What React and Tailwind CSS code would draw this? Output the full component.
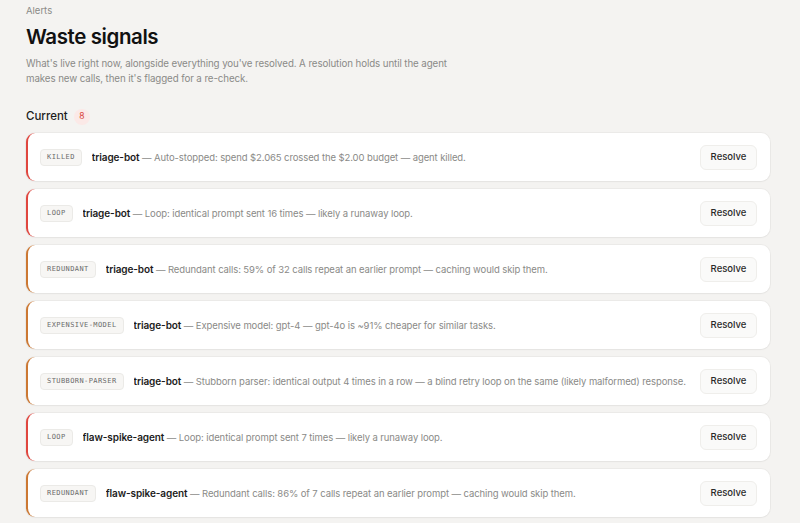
import React from 'react';

const signals = [
  { kind: "KILLED", tone: "red", agent: "triage-bot", text: "Auto-stopped: spend $2.065 crossed the $2.00 budget — agent killed." },
  { kind: "LOOP", tone: "red", agent: "triage-bot", text: "Loop: identical prompt sent 16 times — likely a runaway loop." },
  { kind: "REDUNDANT", tone: "orange", agent: "triage-bot", text: "Redundant calls: 59% of 32 calls repeat an earlier prompt — caching would skip them." },
  { kind: "EXPENSIVE-MODEL", tone: "orange", agent: "triage-bot", text: "Expensive model: gpt-4 — gpt-4o is ~91% cheaper for similar tasks." },
  { kind: "STUBBORN-PARSER", tone: "orange", agent: "triage-bot", text: "Stubborn parser: identical output 4 times in a row — a blind retry loop on the same (likely malformed) response." },
  { kind: "LOOP", tone: "red", agent: "flaw-spike-agent", text: "Loop: identical prompt sent 7 times — likely a runaway loop." },
  { kind: "REDUNDANT", tone: "orange", agent: "flaw-spike-agent", text: "Redundant calls: 86% of 7 calls repeat an earlier prompt — caching would skip them." },
];

function SignalRow({ signal }) {
  const border = signal.tone === "red" ? "border-l-[#e0463f]" : "border-l-[#cc7833]";
  return (
    <div className={`flex items-center h-[48px] bg-white rounded-[9px] border-l-2 ${border} shadow-[0_0_0_1px_rgba(0,0,0,0.035),0_1px_2px_rgba(0,0,0,0.03)] pl-[12px] pr-[13px]`}>
      <span className="h-[17px] flex items-center px-[6px] rounded-[4px] border border-[#ebeae7] bg-[#f7f6f4] text-[7px] tracking-[0.06em] text-[#6b6b6b] font-['DejaVu_Sans_Mono',monospace]">
        {signal.kind}
      </span>
      <p className="ml-[10px] flex-1 min-w-0 text-[9.5px] tracking-[-0.01em] text-[#8a8a87] truncate">
        <span className="font-semibold text-[#1c1c1c] text-[10px]">{signal.agent}</span> — {signal.text}
      </p>
      <button className="ml-[8px] shrink-0 h-[25px] w-[57px] rounded-[6px] border border-[#efeeeb] bg-[#fafaf9] text-[9.5px] font-medium text-[#2a2a2a]">
        Resolve
      </button>
    </div>
  );
}

export default function App() {
  return (
    <div className="min-h-[523px] bg-[#f4f3f1] font-['Inter',sans-serif] pl-[26px] pr-[30px] pt-[4px]">
      <p className="text-[9.5px] text-[#8a8a87] leading-[13px]">Alerts</p>
      <h1 className="mt-[6px] text-[20.5px] font-semibold text-[#111] leading-[28px] tracking-[-0.02em]">Waste signals</h1>
      <p className="mt-[5px] w-[440px] text-[9.75px] tracking-[-0.01em] leading-[15px] text-[#8a8a87]">
        What's live right now, alongside everything you've resolved. A resolution holds until the agent makes new calls, then it's flagged for a re-check.
      </p>
      <div className="mt-[22px] flex items-center gap-[6px]">
        <span className="text-[11.5px] font-medium text-[#1c1c1c]">Current</span>
        <span className="h-[16px] min-w-[16px] flex items-center justify-center rounded-full bg-[#fbe9e7] text-[8.5px] text-[#d8443c]">8</span>
      </div>
      <div className="mt-[8px] flex flex-col gap-[8px]">
        {signals.map((s, i) => (
          <SignalRow key={i} signal={s} />
        ))}
      </div>
    </div>
  );
}
